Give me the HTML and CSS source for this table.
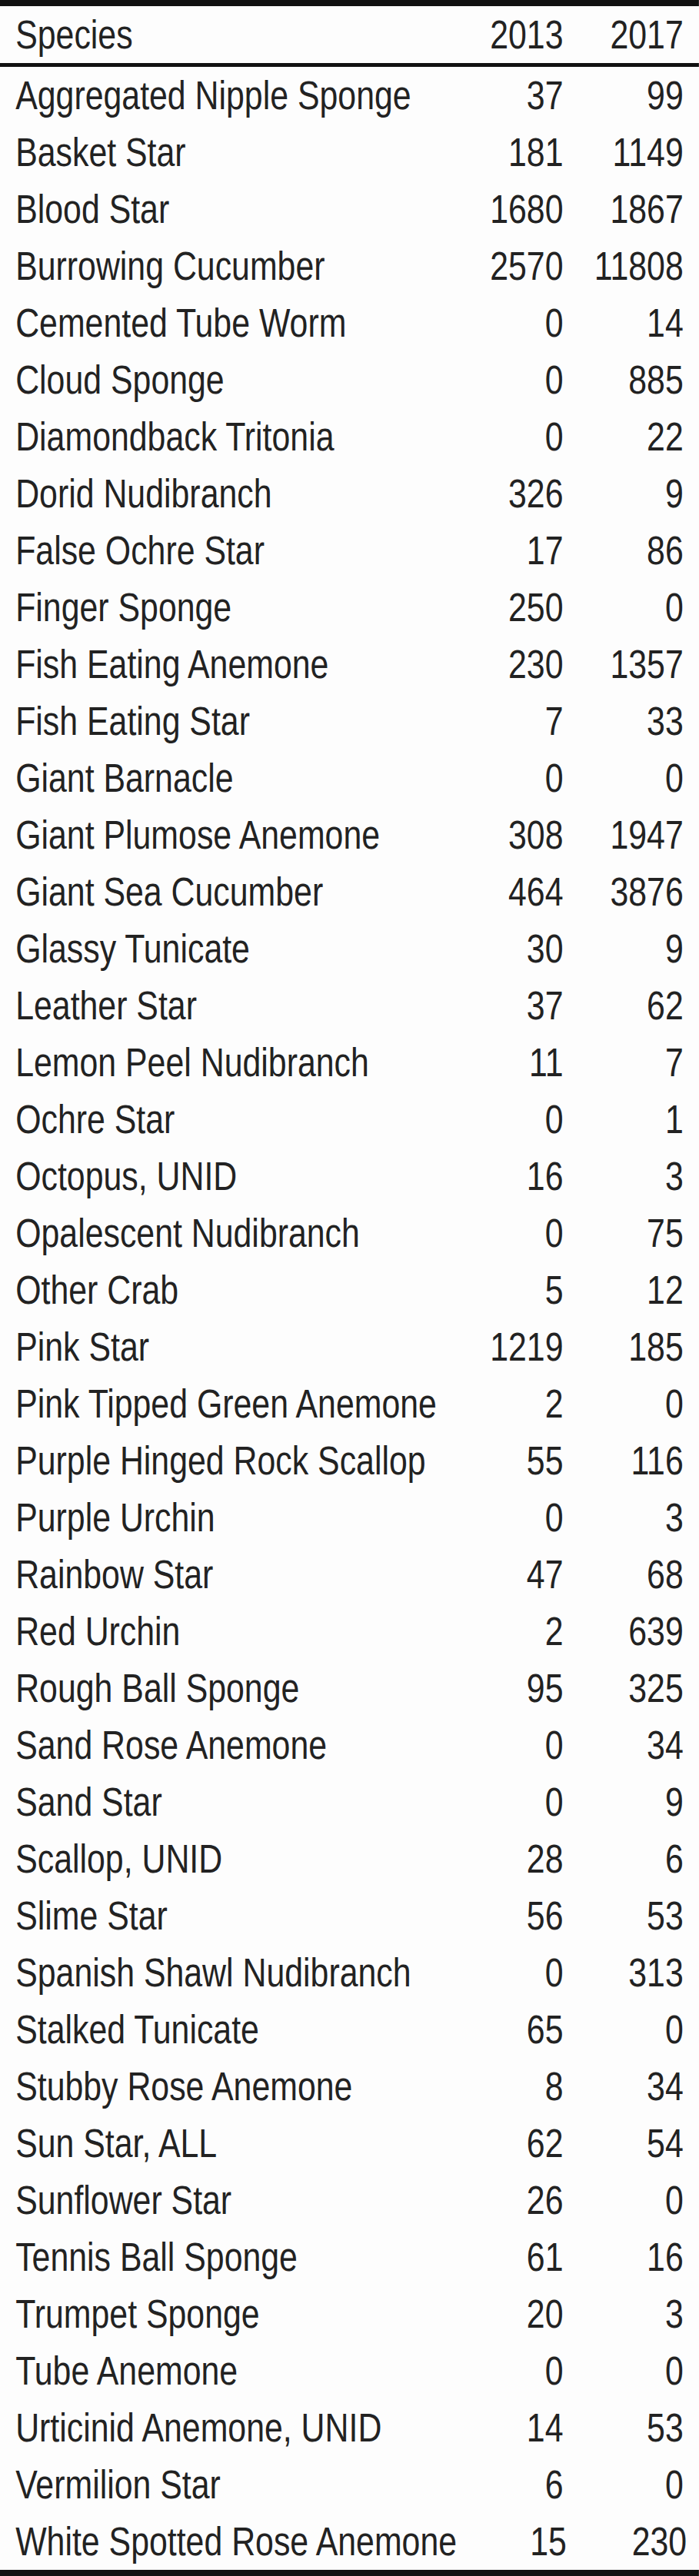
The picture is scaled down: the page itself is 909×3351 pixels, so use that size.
FILE: index.html
```html
<!DOCTYPE html>
<html>
<head>
<meta charset="utf-8">
<link rel="stylesheet" href="styles.css">
</head>
<body>
<div class="table">
  <div class="row head"><span class="name">Species</span><span class="num">2013</span><span class="num">2017</span></div>
  <div class="body">
    <div class="row"><span class="name">Aggregated Nipple Sponge</span><span class="num">37</span><span class="num">99</span></div>
    <div class="row"><span class="name">Basket Star</span><span class="num">181</span><span class="num">1149</span></div>
    <div class="row"><span class="name">Blood Star</span><span class="num">1680</span><span class="num">1867</span></div>
    <div class="row"><span class="name">Burrowing Cucumber</span><span class="num">2570</span><span class="num">11808</span></div>
    <div class="row"><span class="name">Cemented Tube Worm</span><span class="num">0</span><span class="num">14</span></div>
    <div class="row"><span class="name">Cloud Sponge</span><span class="num">0</span><span class="num">885</span></div>
    <div class="row"><span class="name">Diamondback Tritonia</span><span class="num">0</span><span class="num">22</span></div>
    <div class="row"><span class="name">Dorid Nudibranch</span><span class="num">326</span><span class="num">9</span></div>
    <div class="row"><span class="name">False Ochre Star</span><span class="num">17</span><span class="num">86</span></div>
    <div class="row"><span class="name">Finger Sponge</span><span class="num">250</span><span class="num">0</span></div>
    <div class="row"><span class="name">Fish Eating Anemone</span><span class="num">230</span><span class="num">1357</span></div>
    <div class="row"><span class="name">Fish Eating Star</span><span class="num">7</span><span class="num">33</span></div>
    <div class="row"><span class="name">Giant Barnacle</span><span class="num">0</span><span class="num">0</span></div>
    <div class="row"><span class="name">Giant Plumose Anemone</span><span class="num">308</span><span class="num">1947</span></div>
    <div class="row"><span class="name">Giant Sea Cucumber</span><span class="num">464</span><span class="num">3876</span></div>
    <div class="row"><span class="name">Glassy Tunicate</span><span class="num">30</span><span class="num">9</span></div>
    <div class="row"><span class="name">Leather Star</span><span class="num">37</span><span class="num">62</span></div>
    <div class="row"><span class="name">Lemon Peel Nudibranch</span><span class="num">11</span><span class="num">7</span></div>
    <div class="row"><span class="name">Ochre Star</span><span class="num">0</span><span class="num">1</span></div>
    <div class="row"><span class="name">Octopus, UNID</span><span class="num">16</span><span class="num">3</span></div>
    <div class="row"><span class="name">Opalescent Nudibranch</span><span class="num">0</span><span class="num">75</span></div>
    <div class="row"><span class="name">Other Crab</span><span class="num">5</span><span class="num">12</span></div>
    <div class="row"><span class="name">Pink Star</span><span class="num">1219</span><span class="num">185</span></div>
    <div class="row"><span class="name">Pink Tipped Green Anemone</span><span class="num">2</span><span class="num">0</span></div>
    <div class="row"><span class="name">Purple Hinged Rock Scallop</span><span class="num">55</span><span class="num">116</span></div>
    <div class="row"><span class="name">Purple Urchin</span><span class="num">0</span><span class="num">3</span></div>
    <div class="row"><span class="name">Rainbow Star</span><span class="num">47</span><span class="num">68</span></div>
    <div class="row"><span class="name">Red Urchin</span><span class="num">2</span><span class="num">639</span></div>
    <div class="row"><span class="name">Rough Ball Sponge</span><span class="num">95</span><span class="num">325</span></div>
    <div class="row"><span class="name">Sand Rose Anemone</span><span class="num">0</span><span class="num">34</span></div>
    <div class="row"><span class="name">Sand Star</span><span class="num">0</span><span class="num">9</span></div>
    <div class="row"><span class="name">Scallop, UNID</span><span class="num">28</span><span class="num">6</span></div>
    <div class="row"><span class="name">Slime Star</span><span class="num">56</span><span class="num">53</span></div>
    <div class="row"><span class="name">Spanish Shawl Nudibranch</span><span class="num">0</span><span class="num">313</span></div>
    <div class="row"><span class="name">Stalked Tunicate</span><span class="num">65</span><span class="num">0</span></div>
    <div class="row"><span class="name">Stubby Rose Anemone</span><span class="num">8</span><span class="num">34</span></div>
    <div class="row"><span class="name">Sun Star, ALL</span><span class="num">62</span><span class="num">54</span></div>
    <div class="row"><span class="name">Sunflower Star</span><span class="num">26</span><span class="num">0</span></div>
    <div class="row"><span class="name">Tennis Ball Sponge</span><span class="num">61</span><span class="num">16</span></div>
    <div class="row"><span class="name">Trumpet Sponge</span><span class="num">20</span><span class="num">3</span></div>
    <div class="row"><span class="name">Tube Anemone</span><span class="num">0</span><span class="num">0</span></div>
    <div class="row"><span class="name">Urticinid Anemone, UNID</span><span class="num">14</span><span class="num">53</span></div>
    <div class="row"><span class="name">Vermilion Star</span><span class="num">6</span><span class="num">0</span></div>
    <div class="row"><span class="name">White Spotted Rose Anemone</span><span class="num">15</span><span class="num">230</span></div>
  </div>
</div>
</body>
</html>
```
FILE: styles.css
```css
html, body {
  margin: 0;
  padding: 0;
  background: #fdfdfd;
  overflow: hidden;
}

/* The reference text is a horizontally condensed sans; no narrow face is
   installed, so the whole table is laid out wide and squeezed on x only. */
.table {
  width: 1082px;
  transform: scaleX(0.84);
  transform-origin: 0 0;
  border-top: 8px solid #111;
  border-bottom: 8px solid #111;
  font-family: "Liberation Sans", Arial, sans-serif;
  font-size: 51px;
  color: #222;
}

.row {
  display: grid;
  grid-template-columns: 1fr 170px 186px;
  padding: 2px 24px 0;
  height: 74px;
  box-sizing: border-box;
  line-height: 72px;
  white-space: nowrap;
}

.head {
  border-bottom: 5px solid #111;
  height: 79px;
}

.num {
  text-align: right;
}
```
